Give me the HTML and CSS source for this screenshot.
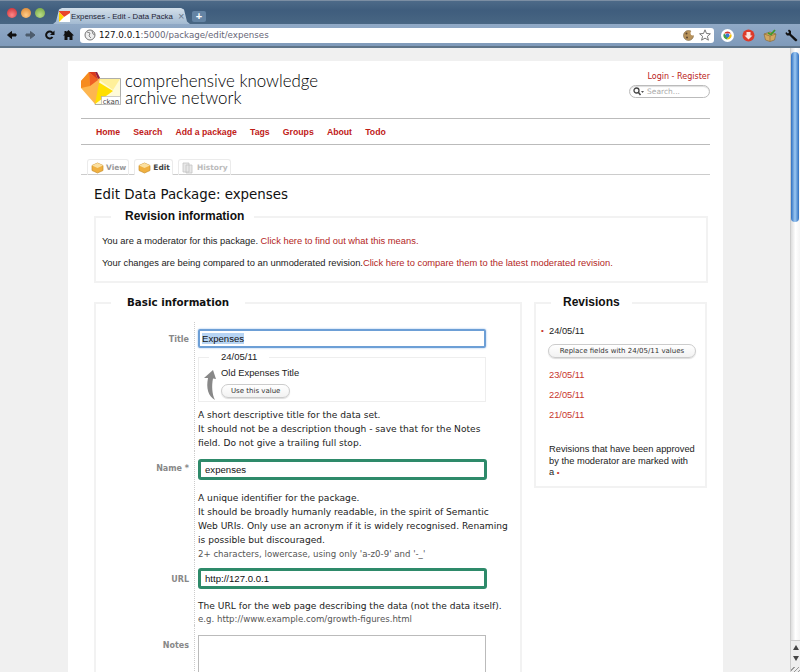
FILE: index.html
```html
<!DOCTYPE html>
<html lang="en">
<head>
    <meta charset="UTF-8">
    <title>Expenses - Edit - Data Packages</title>
    <link rel="stylesheet" href="styles.css">
</head>
<body>
    <div class="tabstrip">
        <div class="lights">
            <span class="light red"></span>
            <span class="light amber"></span>
            <span class="light green"></span>
        </div>
        <div class="tab">
            <svg class="favicon" width="11" height="11" viewBox="0 0 11 11">
                <rect width="11" height="11" fill="#fff"/>
                <path d="M0 0H11V2L5 6L0 1Z" fill="#e8452c"/>
                <path d="M0 1L5 6L0 11Z" fill="#ffd400"/>
            </svg>
            <span class="tab-title">Expenses - Edit - Data Packa</span>
            <span class="tab-close">&times;</span>
        </div>
        <div class="newtab">+</div>
    </div>
    <div class="toolbar">
        <div class="navicons">
            <svg width="12" height="12" viewBox="0 0 12 12"><path d="M10 5H5.5V2.5L1.500 6L5.500 9.500V7H10Z" fill="#111" stroke="#111"/></svg>
            <svg width="12" height="12" viewBox="0 0 12 12"><path d="M1 5H5.500V2.500L10 6L5.500 9.500V7H1Z" fill="#4d5c6c" stroke="#4d5c6c"/></svg>
            <svg width="12" height="12" viewBox="0 0 12 12"><path d="M8.500 8A3.500 3.500 0 1 1 8.500 4" fill="none" stroke="#111" stroke-width="2"/><path d="M10.500 1.500V6H6Z" fill="#111"/></svg>
            <svg width="12" height="12" viewBox="0 0 12 12"><path d="M5.500 1L11 6.500H9.500V11H6.500V8H4.500V11H1.500V6.500H0L1.500 5V2H3.500V3Z" fill="#111"/></svg>
        </div>
        <div class="omnibox">
            <svg class="globe" width="12" height="12" viewBox="0 0 12 12">
                <circle cx="6" cy="6" r="5" fill="#eee" stroke="#777"/>
                <path d="M3 3L6 4L5 7L7 9M8 2L9 5L11 6" fill="none" stroke="#888"/>
            </svg>
            <span class="url"><b>127.0.0.1</b>:5000/package/edit/expenses</span>
            <svg class="cookie" width="11" height="11" viewBox="0 0 11 11">
                <circle cx="5.5" cy="5.5" r="5" fill="#b8935c" stroke="#7b6648" stroke-width=".6"/>
                <circle cx="3.5" cy="3.5" r="1" fill="#5d4630"/>
                <circle cx="4" cy="7.5" r="1" fill="#5d4630"/>
                <circle cx="10" cy="3" r="2.5" fill="#fff"/>
            </svg>
            <svg class="star" width="12" height="12" viewBox="0 0 12 12"><path d="M6 .8L7.500 4.500L11.400 4.800L8.400 7.300L9.400 11.200L6 9.100L2.600 11.200L3.600 7.300L.6 4.800L4.500 4.500Z" fill="#fff" stroke="#777"/></svg>
        </div>
        <div class="extensions">
            <svg width="13" height="13" viewBox="0 0 13 13">
                <circle cx="6.5" cy="6.5" r="6.5" fill="#fff"/>
                <path d="M3 4.500A4 4 0 0 1 10 4.500H6.500Z" fill="#d9392e"/>
                <path d="M3 4.500A4 4 0 0 0 6 10.500L7.500 8Z" fill="#43a047"/>
                <path d="M10 4.500A4 4 0 0 1 6 10.500L8 7.500Z" fill="#f4c20d"/>
                <circle cx="6.5" cy="6.5" r="2" fill="#3b78d8"/>
            </svg>
            <svg width="13" height="13" viewBox="0 0 13 13">
                <circle cx="6.5" cy="6.5" r="6" fill="#dc3a2a"/>
                <path d="M4.500 3H8.500V6.500H10.500L6.500 10.500L2.500 6.500H4.500Z" fill="#fbe3dc"/>
            </svg>
            <svg width="14" height="13" viewBox="0 0 14 13">
                <path d="M1 5L7 3L13 5L11.500 11L7 12.500L2.500 11Z" fill="#d3a85f" stroke="#8d6e3c" stroke-width=".7"/>
                <path d="M1 5L7 7L13 5M7 7V12.500" fill="none" stroke="#8d6e3c" stroke-width=".7"/>
                <path d="M5 4L8 5.500L12 1" fill="none" stroke="#3c9a2e" stroke-width="1.800"/>
            </svg>
            <svg width="13" height="13" viewBox="0 0 13 13"><path d="M4 .5L6 2V5L11 9.500L12.500 11L11 12.500L9.500 11.500L4.500 6.500H2L.5 4.500L1 3L3 4.500L4 3.500L3 1.500Z" fill="#111"/></svg>
        </div>
    </div>

    <div class="viewport">
        <div class="wrapper">
            <div class="header">
                <svg class="logo" width="42" height="36" viewBox="0 0 42 36">
                    <path d="M18 7.500H40.500V33.500H15Z" fill="#fffbd8" stroke="#999" stroke-width=".8"/>
                    <path d="M18 8H40L33 19Z" fill="#fff09a"/>
                    <path d="M15 9L33 20L15 33Z" fill="#ffdf00"/>
                    <path d="M1 10L9 1H17L20 7L15 33L1 17Z" fill="#fdb64f"/>
                    <path d="M1 10L9 1L10 15L1 17Z" fill="#f68b1f"/>
                    <path d="M9 1L18 9L10 15Z" fill="#ef5f24"/>
                    <path d="M9 1H15L18 9Z" fill="#d9381e"/>
                    <path d="M15 1L17 1L20 7L18 8Z" fill="#8e1d4a"/>
                    <rect x="21.5" y="25.5" width="19" height="8" fill="#fff" stroke="#aaa" stroke-width=".6"/>
                    <text x="31" y="32.5" class="logo-word" text-anchor="middle">ckan</text>
                </svg>
                <div class="sitename">comprehensive knowledge<br>archive network</div>
                <div class="account">
                    <div class="account-links"><a href="#">Login</a> - <a href="#">Register</a></div>
                    <div class="searchbox">
                        <svg width="11" height="9" viewBox="0 0 11 9"><circle cx="3.5" cy="3.5" r="2.5" fill="none" stroke="#444" stroke-width="1.300"/><path d="M5.500 5.500L7.500 8" stroke="#444" stroke-width="1.500"/><path d="M8 4H11L9.500 6Z" fill="#555"/></svg>
                        <span>Search...</span>
                    </div>
                </div>
            </div>

            <nav class="mainnav">
                <a href="#">Home</a>
                <a href="#">Search</a>
                <a href="#">Add a package</a>
                <a href="#">Tags</a>
                <a href="#">Groups</a>
                <a href="#">About</a>
                <a href="#">Todo</a>
            </nav>

            <div class="tabs">
                <a class="pagetab" href="#">
                    <svg width="13" height="12" viewBox="0 0 13 12"><path d="M6.500 1L12 3.500V8.500L6.500 11L1 8.500V3.500Z" fill="#f0b040" stroke="#c98f2c" stroke-width=".7"/><path d="M1 3.500L6.500 6L12 3.500L6.500 1Z" fill="#fbe0a0"/></svg>
                    View
                </a>
                <a class="pagetab current" href="#">
                    <svg width="13" height="12" viewBox="0 0 13 12"><path d="M6.500 1L12 3.500V8.500L6.500 11L1 8.500V3.500Z" fill="#f0b040" stroke="#c98f2c" stroke-width=".7"/><path d="M1 3.500L6.500 6L12 3.500L6.500 1Z" fill="#fbe0a0"/></svg>
                    Edit
                </a>
                <a class="pagetab disabled" href="#">
                    <svg width="13" height="12" viewBox="0 0 13 12"><path d="M1 1H7V10H1Z M4 3H10V11H4Z" fill="#e8e8e8" stroke="#c4c4c4" stroke-width=".8"/></svg>
                    History
                </a>
            </div>

            <h1 class="pagetitle">Edit Data Package: expenses</h1>

            <fieldset class="box revision-info">
                <legend>Revision information</legend>
                <p>You are a moderator for this package. <a href="#">Click here to find out what this means.</a></p>
                <p>Your changes are being compared to an unmoderated revision.<a href="#">Click here to compare them to the latest moderated revision.</a></p>
            </fieldset>

            <div class="columns">
                <fieldset class="box basic">
                    <legend>Basic information</legend>
                    <div class="form">
                        <div class="row row-title">
                            <label>Title</label>
                            <div class="field">
                                <div class="input focus"><span class="selected">Expenses</span></div>
                                <fieldset class="oldvalue">
                                    <legend>24/05/11</legend>
                                    <svg class="revert" width="12" height="30" viewBox="0 0 12 30"><path d="M11 30C4 26 2 18 4 8L0 8L9 0L12 9L9 8.500C7.500 16 8 24 11 30Z" fill="#888"/></svg>
                                    <div class="oldtext">Old Expenses Title</div>
                                    <a class="pill" href="#">Use this value</a>
                                </fieldset>
                                <p class="hint">A short descriptive title for the data set.<br>It should not be a description though - save that for the Notes<br>field. Do not give a trailing full stop.</p>
                            </div>
                        </div>
                        <div class="row row-name">
                            <label>Name *</label>
                            <div class="field">
                                <div class="input changed">expenses</div>
                                <p class="hint">A unique identifier for the package.<br>It should be broadly humanly readable, in the spirit of Semantic<br>Web URIs. Only use an acronym if it is widely recognised. Renaming<br>is possible but discouraged.</p>
                                <p class="small">2+ characters, lowercase, using only 'a-z0-9' and '-_'</p>
                            </div>
                        </div>
                        <div class="row row-url">
                            <label>URL</label>
                            <div class="field">
                                <div class="input changed">http://127.0.0.1</div>
                                <p class="hint">The URL for the web page describing the data (not the data itself).</p>
                                <p class="small">e.g. http://www.example.com/growth-figures.html</p>
                            </div>
                        </div>
                        <div class="row row-notes">
                            <label>Notes</label>
                            <div class="field">
                                <div class="textarea"></div>
                            </div>
                        </div>
                    </div>
                </fieldset>

                <fieldset class="box revisions">
                    <legend>Revisions</legend>
                    <ul class="revlist">
                        <li class="approved">24/05/11</li>
                        <li class="replace"><a class="pill" href="#">Replace fields with 24/05/11 values</a></li>
                        <li><a href="#">23/05/11</a></li>
                        <li><a href="#">22/05/11</a></li>
                        <li><a href="#">21/05/11</a></li>
                    </ul>
                    <p class="revnote">Revisions that have been approved<br>by the moderator are marked with<br>a <span class="dot">&bull;</span></p>
                </fieldset>
            </div>
        </div>

        <div class="scrollbar">
            <div class="thumb"></div>
            <div class="scroll-end">
                <span class="arrow up"></span>
                <span class="arrow down"></span>
                <span class="resizer"></span>
            </div>
        </div>
    </div>
</body>
</html>
```

FILE: styles.css
```css
html, body {
    margin: 0;
    padding: 0;
    height: 672px;
    overflow: hidden;
}
body {
    font-family: "Liberation Sans", Arial, sans-serif;
    font-size: 10px;
    color: #222;
    background: #f0f0f0;
}
a {
    color: #b22;
    text-decoration: none;
}

/* browser chrome */
.tabstrip {
    height: 24px;
    display: flex;
    align-items: flex-end;
    box-sizing: border-box;
    border-top: 1px solid #7b8ea3;
    background: linear-gradient(#4d6a88, #3f5d7d 40%, #486683);
}
.lights {
    display: flex;
    gap: 4px;
    align-self: flex-start;
    margin: 7px 0 0 7px;
}
.light {
    width: 10px;
    height: 10px;
    border-radius: 50%;
}
.red { background: radial-gradient(circle at 50% 70%, #f88, #c4242c); }
.amber { background: radial-gradient(circle at 50% 70%, #fc8, #d9802a); }
.green { background: radial-gradient(circle at 50% 70%, #bd8, #6fa23c); }
.tab {
    width: 137px;
    height: 16px;
    box-sizing: border-box;
    margin-left: 8px;
    padding-left: 6px;
    display: flex;
    align-items: center;
    gap: 1px;
    background: linear-gradient(#d3dfe9, #a3bad1);
    clip-path: polygon(0 100%, 3px 85%, 6px 10%, 9px 0, 128px 0, 131px 10%, 134px 85%, 137px 100%);
    font-size: 7.8px;
    color: #223;
}
.tab-title {
    white-space: nowrap;
    width: 106px;
    flex: none;
}
.tab-close {
    color: #66788c;
    font-size: 11px;
    line-height: 11px;
}
.favicon {
    flex: none;
}
.newtab {
    width: 14px;
    height: 11px;
    margin: 0 0 2px 2px;
    background: #6484a4;
    border-radius: 2px;
    color: #fff;
    font-weight: bold;
    font-size: 11px;
    line-height: 10px;
    text-align: center;
}
.toolbar {
    height: 24px;
    box-sizing: border-box;
    display: flex;
    align-items: center;
    background: linear-gradient(#90a9c6, #7f9aba);
    border-bottom: 2px solid #5f7488;
}
.navicons {
    width: 80px;
    padding-left: 6px;
    box-sizing: border-box;
    display: flex;
    gap: 7px;
    flex: none;
}
.omnibox {
    width: 634px;
    height: 15px;
    flex: none;
    display: flex;
    align-items: center;
    box-sizing: border-box;
    padding: 0 3px 0 4px;
    background: #fff;
    border-radius: 3px;
}
.url {
    margin-left: 3px;
    flex: 1;
    font-family: "DejaVu Sans", sans-serif;
    font-size: 8.7px;
    color: #667;
}
.url b {
    font-weight: normal;
    color: #111;
}
.cookie {
    margin-right: 5px;
}
.extensions {
    display: flex;
    gap: 8px;
    padding-left: 7px;
}

/* page */
.viewport {
    display: flex;
    height: 624px;
    overflow: hidden;
}
.wrapper {
    width: 655px;
    height: 700px;
    flex: none;
    box-sizing: border-box;
    margin: 13px 67px 0 68px;
    padding: 0 13px;
    background: #fff;
}
.header {
    display: flex;
    height: 58px;
    box-sizing: border-box;
    padding-top: 10px;
    border-bottom: 1px solid #bbb;
}
.logo {
    margin-left: -1px;
    flex: none;
}
.logo-word {
    font-family: "DejaVu Sans", sans-serif;
    font-size: 7px;
    fill: #444;
}
.sitename {
    margin-left: 3px;
    padding-top: 1px;
    font-family: "Lato", sans-serif;
    font-weight: 300;
    font-size: 16.9px;
    line-height: 17px;
    color: #000;
}
.account {
    margin-left: auto;
    text-align: right;
    font-family: "DejaVu Sans", sans-serif;
    font-size: 8px;
    color: #b22;
}
.account-links {
    line-height: 12px;
}
.searchbox {
    width: 81px;
    height: 13px;
    margin: 2px 0 0 auto;
    box-sizing: border-box;
    display: flex;
    align-items: center;
    gap: 3px;
    padding-left: 3px;
    border: 1px solid #bbb;
    border-radius: 7px;
    font-size: 7.5px;
    color: #aaa;
    box-shadow: inset 0 1px 1px #ddd;
}
.mainnav {
    height: 25px;
    display: flex;
    align-items: center;
    gap: 13.2px;
    padding-left: 15px;
    border-bottom: 1px solid #bbb;
    font-size: 8.7px;
    font-weight: bold;
}
.mainnav a {
    color: #c02018;
}
.tabs {
    display: flex;
    gap: 5px;
    height: 30px;
    box-sizing: border-box;
    padding: 14px 0 0 6px;
    border-bottom: 1px solid #ccc;
}
.pagetab {
    display: flex;
    align-items: center;
    gap: 2px;
    height: 15px;
    padding: 0 2px 0 3px;
    border: 1px solid #ebebeb;
    border-bottom: none;
    border-radius: 3px 3px 0 0;
    font-family: "DejaVu Sans", sans-serif;
    font-size: 7.5px;
    font-weight: bold;
    color: #999;
}
.current {
    color: #444;
    background: #fff;
}
.disabled {
    color: #bbb;
}
.pagetitle {
    margin: 11px 0 0 13px;
    font-family: "DejaVu Sans", sans-serif;
    font-size: 13.4px;
    line-height: 17px;
    font-weight: normal;
    color: #111;
}

.box {
    margin: 0;
    padding: 0;
    border: 2px solid #f2f2f2;
    min-width: 0;
    box-sizing: border-box;
}
.box > legend {
    font-weight: bold;
    font-size: 12px;
    line-height: 15px;
    padding: 0 10px;
    color: #111;
}
.revision-info {
    width: 614px;
    height: 74px;
    margin: 6px 0 0 13px;
    padding: 0 6px;
}
.box.revision-info > legend {
    margin-left: 9px;
    padding: 0 10px 0 14px;
}
.revision-info p {
    margin: 11px 0;
    font-size: 9.35px;
    line-height: 11px;
}
.revision-info p:first-of-type {
    margin-top: 12px;
}
.revision-info a {
    color: #b3261e;
}
.columns {
    display: flex;
    gap: 12px;
    align-items: flex-start;
    margin: 12px 0 0 13px;
}
.basic {
    width: 428px;
    height: 500px;
}
.box.basic > legend {
    margin-left: 15px;
    padding: 0 16px;
    font-family: "DejaVu Sans", sans-serif;
    font-size: 10.3px;
}
.revisions {
    width: 173px;
    height: 193px;
    padding: 0 5px 0 13px;
}
.box.revisions > legend {
    margin-left: 2px;
    padding: 0 12px;
}

/* form rows */
.form {
    margin-top: 12px;
}
.row {
    display: flex;
}
.row label {
    width: 98px;
    flex: none;
    padding-right: 5px;
    padding-top: 12px;
    box-sizing: border-box;
    text-align: right;
    font-family: "DejaVu Sans", sans-serif;
    font-size: 8px;
    line-height: 12px;
    font-weight: bold;
    color: #888;
}
.field {
    width: 320px;
    flex: none;
    padding-left: 3px;
    padding-top: 7px;
    border-left: 1px dotted #ccc;
    box-sizing: border-box;
}
.input {
    width: 288px;
    height: 19px;
    box-sizing: border-box;
    padding-left: 2px;
    font-size: 9.6px;
    line-height: 15px;
    color: #111;
}
.focus {
    border: 2px solid #6d9fd6;
    border-radius: 2px;
    box-shadow: 0 0 2px #8fb6e6;
}
.selected {
    background: #b6d4f4;
}
.changed {
    width: 289px;
    height: 21px;
    padding-left: 4px;
    border: 3px solid #2e8a6a;
    border-radius: 3px;
    line-height: 15px;
}
.oldvalue {
    width: 288px;
    height: 51px;
    position: relative;
    margin: 3px 0 0;
    padding: 0 0 0 22px;
    box-sizing: border-box;
    border: 1px solid #eee;
    font-size: 9.4px;
}
.oldvalue legend {
    padding: 0 12px;
    margin-left: -12px;
    font-size: 9.5px;
    line-height: 12px;
    color: #222;
}
.revert {
    position: absolute;
    left: 5px;
    top: 7px;
}
.oldtext {
    margin-top: 3px;
    line-height: 14px;
    color: #222;
}
.pill {
    display: inline-block;
    box-sizing: border-box;
    height: 14px;
    padding: 0 9px;
    border: 1px solid #ccc;
    border-radius: 7px;
    font-family: "DejaVu Sans", sans-serif;
    font-size: 7px;
    line-height: 12px;
    color: #333;
    background: linear-gradient(#fff, #f2f2f2);
    box-shadow: 0 1px 1px #ddd;
}
.oldvalue .pill {
    margin-top: 4px;
}
.hint {
    margin: 6px 0 0;
    white-space: nowrap;
    font-family: "DejaVu Sans", sans-serif;
    font-size: 9.1px;
    line-height: 14.2px;
    color: #222;
}
.small {
    margin: 1px 0 0;
    font-family: "DejaVu Sans", sans-serif;
    font-size: 8.6px;
    line-height: 12px;
    color: #555;
}
.row-name .field {
    padding-top: 8px;
}
.row-name .hint {
    margin-top: 11px;
}
.row-url .field {
    padding-top: 8px;
}
.row-url label {
    padding-top: 14px;
}
.row-url .hint {
    margin-top: 10px;
}
.row-url .small {
    margin-top: -1px;
}
.row-notes .field {
    padding-top: 10px;
}
.row-notes label {
    padding-top: 15px;
}
.textarea {
    width: 288px;
    height: 100px;
    box-sizing: border-box;
    border: 1px solid #bbb;
}

/* revisions box */
.revlist {
    list-style: none;
    margin: 15px 0 0;
    padding: 0;
    font-size: 9.3px;
}
.revlist li {
    line-height: 12px;
    margin-bottom: 8px;
}
.revlist a {
    color: #c8352c;
}
.approved {
    position: relative;
}
.approved::before {
    content: "\2022";
    position: absolute;
    left: -8px;
    color: #c8352c;
    font-size: 8px;
}
.revlist .replace {
    margin: -2px 0 11px -1px;
    line-height: 14px;
}
.replace .pill {
    width: 148px;
    padding: 0;
    text-align: center;
    color: #333;
}
.revnote {
    margin: 23px 0 0;
    font-size: 9.3px;
    line-height: 11.5px;
    color: #222;
}
.dot {
    color: #c8352c;
    font-size: 8px;
}

/* scrollbar */
.scrollbar {
    width: 10px;
    flex: none;
    margin-left: auto;
    position: relative;
    background: linear-gradient(90deg, #ddd, #fff 50%, #f4f4f4);
    border-left: 1px solid #ccc;
    box-sizing: border-box;
}
.thumb {
    width: 8px;
    height: 170px;
    margin: 4px 0 0 0;
    border-radius: 4px;
    background: linear-gradient(90deg, #2f6fc0, #9cc8f2 50%, #2f6fc0);
}
.scroll-end {
    position: absolute;
    left: 0;
    right: 0;
    bottom: 0;
    height: 32px;
    box-sizing: border-box;
    padding-top: 4px;
    display: flex;
    flex-direction: column;
    align-items: center;
    gap: 6px;
    background: #eee;
    border-top: 1px solid #ccc;
}
.arrow {
    width: 0;
    height: 0;
    border-left: 3px solid transparent;
    border-right: 3px solid transparent;
}
.up { border-bottom: 5px solid #444; }
.down { border-top: 5px solid #444; }
.resizer {
    width: 9px;
    height: 8px;
    margin-top: auto;
    background: repeating-linear-gradient(135deg, #eee 0 2px, #999 2px 3px);
}
```
